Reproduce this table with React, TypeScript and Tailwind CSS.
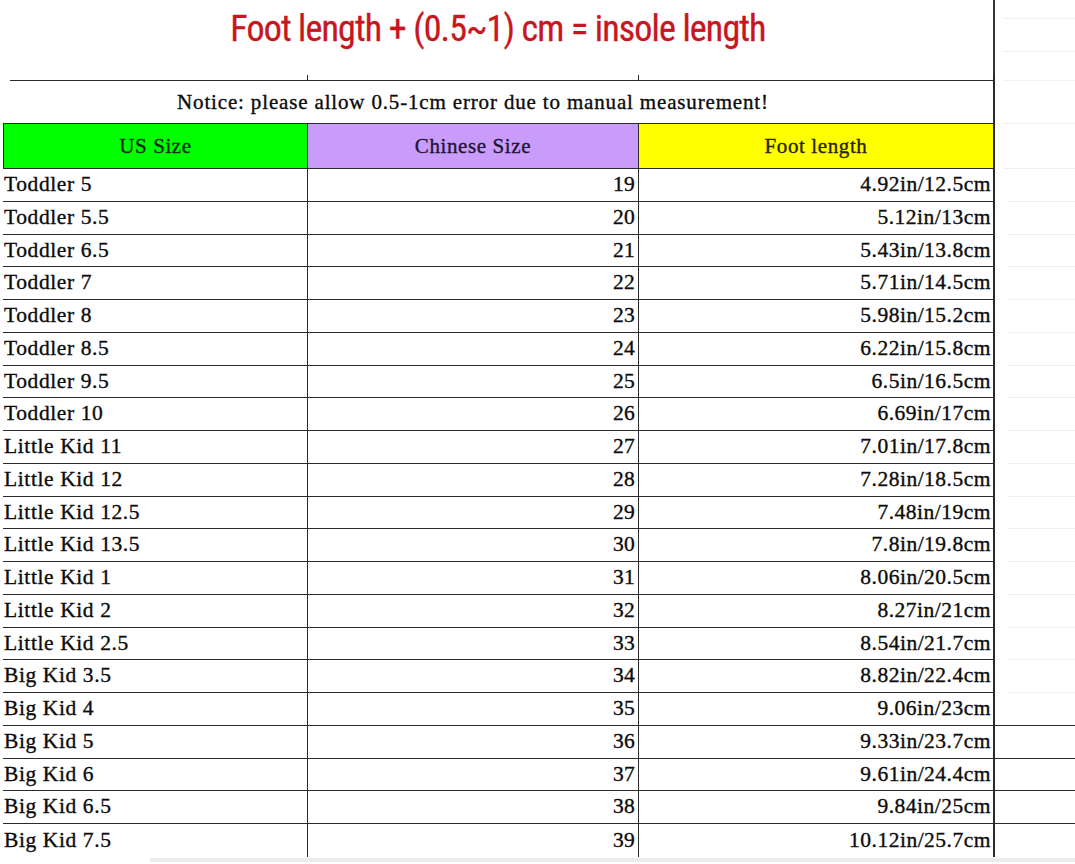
import React from "react";

type Row = { us: string; cn: number; foot: string };

const rows: Row[] = [
  { us: "Toddler 5", cn: 19, foot: "4.92in/12.5cm" },
  { us: "Toddler 5.5", cn: 20, foot: "5.12in/13cm" },
  { us: "Toddler 6.5", cn: 21, foot: "5.43in/13.8cm" },
  { us: "Toddler 7", cn: 22, foot: "5.71in/14.5cm" },
  { us: "Toddler 8", cn: 23, foot: "5.98in/15.2cm" },
  { us: "Toddler 8.5", cn: 24, foot: "6.22in/15.8cm" },
  { us: "Toddler 9.5", cn: 25, foot: "6.5in/16.5cm" },
  { us: "Toddler 10", cn: 26, foot: "6.69in/17cm" },
  { us: "Little Kid 11", cn: 27, foot: "7.01in/17.8cm" },
  { us: "Little Kid 12", cn: 28, foot: "7.28in/18.5cm" },
  { us: "Little Kid 12.5", cn: 29, foot: "7.48in/19cm" },
  { us: "Little Kid 13.5", cn: 30, foot: "7.8in/19.8cm" },
  { us: "Little Kid 1", cn: 31, foot: "8.06in/20.5cm" },
  { us: "Little Kid 2", cn: 32, foot: "8.27in/21cm" },
  { us: "Little Kid 2.5", cn: 33, foot: "8.54in/21.7cm" },
  { us: "Big Kid 3.5", cn: 34, foot: "8.82in/22.4cm" },
  { us: "Big Kid 4", cn: 35, foot: "9.06in/23cm" },
  { us: "Big Kid 5", cn: 36, foot: "9.33in/23.7cm" },
  { us: "Big Kid 6", cn: 37, foot: "9.61in/24.4cm" },
  { us: "Big Kid 6.5", cn: 38, foot: "9.84in/25cm" },
  { us: "Big Kid 7.5", cn: 39, foot: "10.12in/25.7cm" },
];

const cols = "grid grid-cols-[305px_331px_356px_1fr]";

const App: React.FC = () => {
  return (
    <div
      className="h-[864px] w-[1075px] overflow-hidden bg-white pl-[3px] text-[#0c0c0c] [-webkit-text-stroke:0.35px_currentColor]"
      style={{ fontFamily: '"Liberation Serif", "Times New Roman", serif' }}>
      {/* Title */}
      <div className={cols}>
        <div className="col-span-3 flex h-[75px] justify-center border-r-2 border-[#333] pt-[11px]">
          <span
            className="text-[36px] leading-none tracking-[-0.85px] text-[#c8161e] [-webkit-text-stroke:0.3px_#c8161e]"
            style={{ fontFamily: '"Liberation Sans Narrow", "Roboto Condensed", "Liberation Sans", sans-serif' }}>
            Foot length + (0.5~1) cm = insole length
          </span>
        </div>
        <div className="row-span-2 flex flex-col pl-[8px]">
          <div className="h-[19px] border-b border-[#f0f0f0]" />
          <div className="h-[33px] border-b border-[#f0f0f0]" />
          <div className="h-[29px] border-b border-[#f3f3f3]" />
        </div>
        {/* ticks under title */}
        <div className="ml-[7px] h-[6px] border-r border-b border-[#2a2a2a]" />
        <div className="h-[6px] border-r border-b border-[#2a2a2a]" />
        <div className="h-[6px] border-r-2 border-b border-[#2a2a2a]" />
      </div>

      {/* Notice */}
      <div className={cols}>
        <div className="col-span-3 flex h-[43px] items-center justify-center border-r-2 border-b border-[#2a2a2a] pr-[50px]">
          <span className="text-[21px] leading-none tracking-[0.84px]">
            Notice: please allow 0.5-1cm error due to manual measurement!
          </span>
        </div>
        <div className="ml-[8px] border-b border-[#f0f0f0]" />
      </div>

      {/* Header */}
      <div className={cols}>
        <div className="flex h-[45px] items-center justify-center border-r border-b border-l border-[#2a2a2a] bg-[#00ff00] text-[21px] leading-none tracking-[0.6px] text-[#0d2a0d]">
          US Size
        </div>
        <div className="flex h-[45px] items-center justify-center border-r border-b border-[#2a2a2a] bg-[#c99bfa] text-[21px] leading-none tracking-[0.6px] text-[#1e1535]">
          Chinese Size
        </div>
        <div className="flex h-[45px] items-center justify-center border-r-2 border-b border-[#2a2a2a] bg-[#ffff00] text-[21px] leading-none tracking-[0.6px] text-[#2a2300]">
          Foot length
        </div>
        <div className="ml-[8px] border-b border-[#f0f0f0]" />
      </div>

      {/* Data rows */}
      {rows.map((r, i) => {
        const last = i === rows.length - 1;
        const dark = i >= 16 && i <= 19;
        const line = last ? "" : "border-b border-[#2a2a2a]";
        return (
          <div key={r.us} className={cols}>
            <div className={`flex h-[32.76px] items-center border-r border-[#2a2a2a] pl-[1px] text-[21.5px] leading-none tracking-[0.6px] ${line}`}>
              {r.us}
            </div>
            <div className={`flex h-[32.76px] items-center justify-end border-r border-[#2a2a2a] pr-[3px] text-[21.5px] leading-none tracking-[0.3px] ${line}`}>
              {r.cn}
            </div>
            <div className={`flex h-[32.76px] items-center justify-end border-r-2 border-[#2a2a2a] pr-[2px] text-[21.5px] leading-none tracking-[0.5px] ${line}`}>
              {r.foot}
            </div>
            {last ? (
              <div />
            ) : dark ? (
              <div className="border-b border-[#2a2a2a]" />
            ) : (
              <div className="ml-[12px] border-b border-[#efefef]" />
            )}
          </div>
        );
      })}

      {/* bottom edge */}
      <div className="mt-[1px] ml-[147px] h-[4px] bg-[#ececec]" />
    </div>
  );
};

export default App;
